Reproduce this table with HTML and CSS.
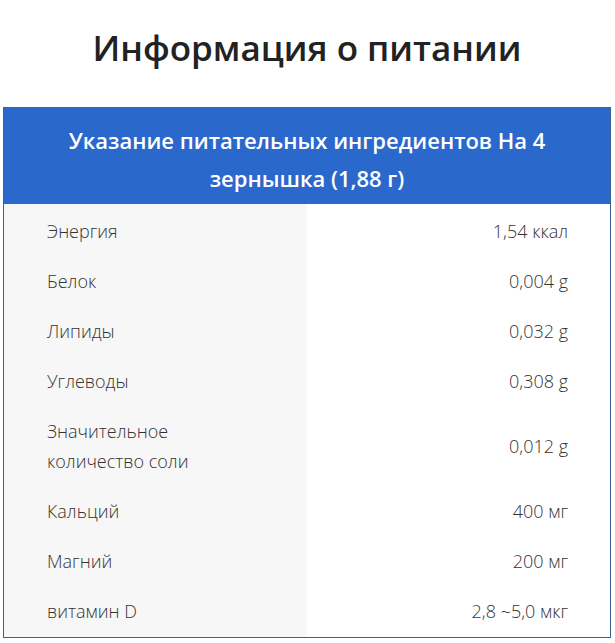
FILE: index.html
```html
<!DOCTYPE html>
<html lang="ru">
<head>
<meta charset="utf-8">
<title>Информация о питании</title>
<link rel="stylesheet" href="styles.css">
</head>
<body>
<div class="page">
  <h1 class="title">Информация о питании</h1>
  <table class="nutri">
    <thead>
      <tr><th colspan="2" class="head">Указание питательных ингредиентов На 4 зернышка (1,88 г)</th></tr>
    </thead>
    <tbody>
      <tr><td class="label">Энергия</td><td class="value">1,54 ккал</td></tr>
      <tr><td class="label">Белок</td><td class="value">0,004 g</td></tr>
      <tr><td class="label">Липиды</td><td class="value">0,032 g</td></tr>
      <tr><td class="label">Углеводы</td><td class="value">0,308 g</td></tr>
      <tr><td class="label">Значительное<br>количество соли</td><td class="value">0,012 g</td></tr>
      <tr><td class="label">Кальций</td><td class="value">400 мг</td></tr>
      <tr><td class="label">Магний</td><td class="value">200 мг</td></tr>
      <tr class="last"><td class="label">витамин D</td><td class="value">2,8 ~5,0 мкг</td></tr>
    </tbody>
  </table>
</div>
</body>
</html>
```
FILE: styles.css
```css
html, body {
  margin: 0;
  padding: 0;
  background: #ffffff;
}
body {
  font-family: "Open Sans", "Noto Sans", sans-serif;
  color: #444;
}
.page {
  padding: 0 4px 0 3px;
}
.title {
  margin: 0;
  padding: 25px 0 36px;
  font-size: 35px;
  line-height: 46px;
  font-weight: 600;
  color: #222;
  text-align: center;
  letter-spacing: 0;
}
.nutri {
  width: 100%;
  border-collapse: collapse;
  table-layout: fixed;
  border: 1px solid #3f5f93;
  border-top: none;
}
.head {
  background: #2b68cc;
  color: #fff;
  font-size: 22px;
  font-weight: 600;
  line-height: 38px;
  padding: 14px 50px 7px;
  text-align: center;
  letter-spacing: 0;
}
.nutri td {
  font-size: 18px;
  font-weight: 300;
  line-height: 30px;
  padding: 12px 0 8px;
  letter-spacing: 0;
  color: #333;
}
.nutri .last td {
  padding-bottom: 11px;
}
.label {
  background: #f7f7f7;
  padding-left: 43px !important;
  text-align: left;
}
.value {
  text-align: right;
  padding-right: 42px !important;
}
```
